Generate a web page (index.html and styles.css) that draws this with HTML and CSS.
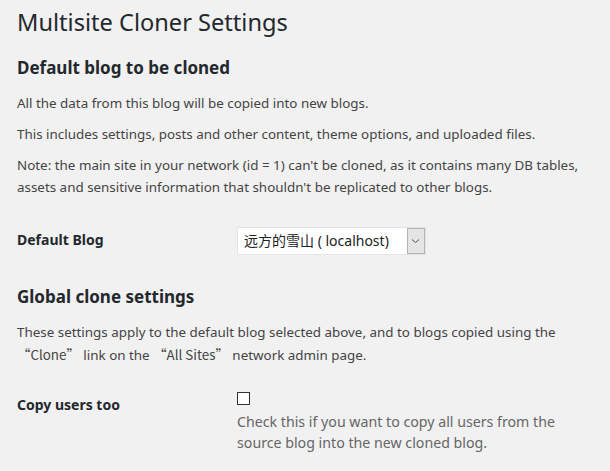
FILE: index.html
```html
<!DOCTYPE html>
<html lang="en">
  <head>
    <meta charset="UTF-8" />
    <title>Multisite Cloner Settings</title>
    <link rel="stylesheet" href="styles.css">
  </head>
  <body>
    <div class="wrap">
      <h1>Multisite Cloner Settings</h1>

      <h2>Default blog to be cloned</h2>
      <p>All the data from this blog will be copied into new blogs.</p>
      <p>This includes settings, posts and other content, theme options, and uploaded files.</p>
      <p>Note: the main site in your network (id = 1) can't be cloned, as it contains many DB tables, assets and sensitive information that shouldn't be replicated to other blogs.</p>

      <table class="form-table first">
        <tr>
          <th>Default Blog</th>
          <td>
            <div class="select">
              <span class="select-value">远方的雪山 ( localhost)</span>
              <span class="select-arrow">
                <svg width="9" height="6" viewBox="0 0 9 6"><path d="M1 1.5 L4.5 4.5 L8 1.5" fill="none" stroke="#555" stroke-width="1"/></svg>
              </span>
            </div>
          </td>
        </tr>
      </table>

      <h2>Global clone settings</h2>
      <p>These settings apply to the default blog selected above, and to blogs copied using the <span class="q">“Clone”</span> link on the <span class="q">“All Sites”</span> network admin page.</p>

      <table class="form-table second">
        <tr>
          <th>Copy users too</th>
          <td>
            <span class="checkbox"></span>
            <p class="description">Check this if you want to copy all users from the source blog into the new cloned blog.</p>
          </td>
        </tr>
      </table>
    </div>
  </body>
</html>
```

FILE: styles.css
```css
* {
  box-sizing: border-box;
}

body {
  margin: 0;
  background: #f1f1f1;
  color: #444;
  font-family: "Noto Sans", "Noto Sans CJK SC", sans-serif;
  font-size: 13.4px;
  line-height: 22px;
}

.wrap {
  padding: 4px 17px 0 17px;
}

h1 {
  margin: 0;
  font-size: 23.6px;
  font-weight: 400;
  color: #23282d;
  line-height: 36px;
}

h2 {
  margin: 16px 0 12px;
  font-size: 17px;
  font-weight: 700;
  color: #23282d;
  line-height: 24px;
}

p {
  margin: 9px 0;
}

/* CJK font gives the wide quote marks */
.q {
  font-family: "Noto Sans CJK SC", sans-serif;
}

.form-table {
  border-collapse: collapse;
  width: 100%;
}

.form-table.first {
  margin-top: 16px;
}

.form-table.second {
  margin-top: 13px;
}

.first + h2 {
  margin-top: 19px;
}

.form-table th {
  width: 220px;
  text-align: left;
  vertical-align: top;
  padding: 15px 0;
  font-size: 14px;
  font-weight: 700;
  color: #23282d;
  line-height: 21px;
}

.form-table td {
  vertical-align: top;
  padding: 13px 0 11px;
}

.select {
  display: inline-flex;
  align-items: stretch;
  height: 28px;
  background: #fff;
  border: 1px solid #e4e4e4;
  font-size: 14px;
  color: #222;
}

.select-value {
  padding: 0 18px 0 6px;
  line-height: 26px;
}

.select-arrow {
  width: 18px;
  display: flex;
  align-items: center;
  justify-content: center;
  background: #e5e5e5;
  border: 1px solid #b4b4b4;
}

.checkbox {
  display: block;
  width: 13px;
  height: 13px;
  border: 1px solid #333;
  background: #fff;
}

.description {
  margin: 6px 0 0;
  font-size: 14.2px;
  color: #666;
  width: 345px;
  line-height: 21px;
}
```
